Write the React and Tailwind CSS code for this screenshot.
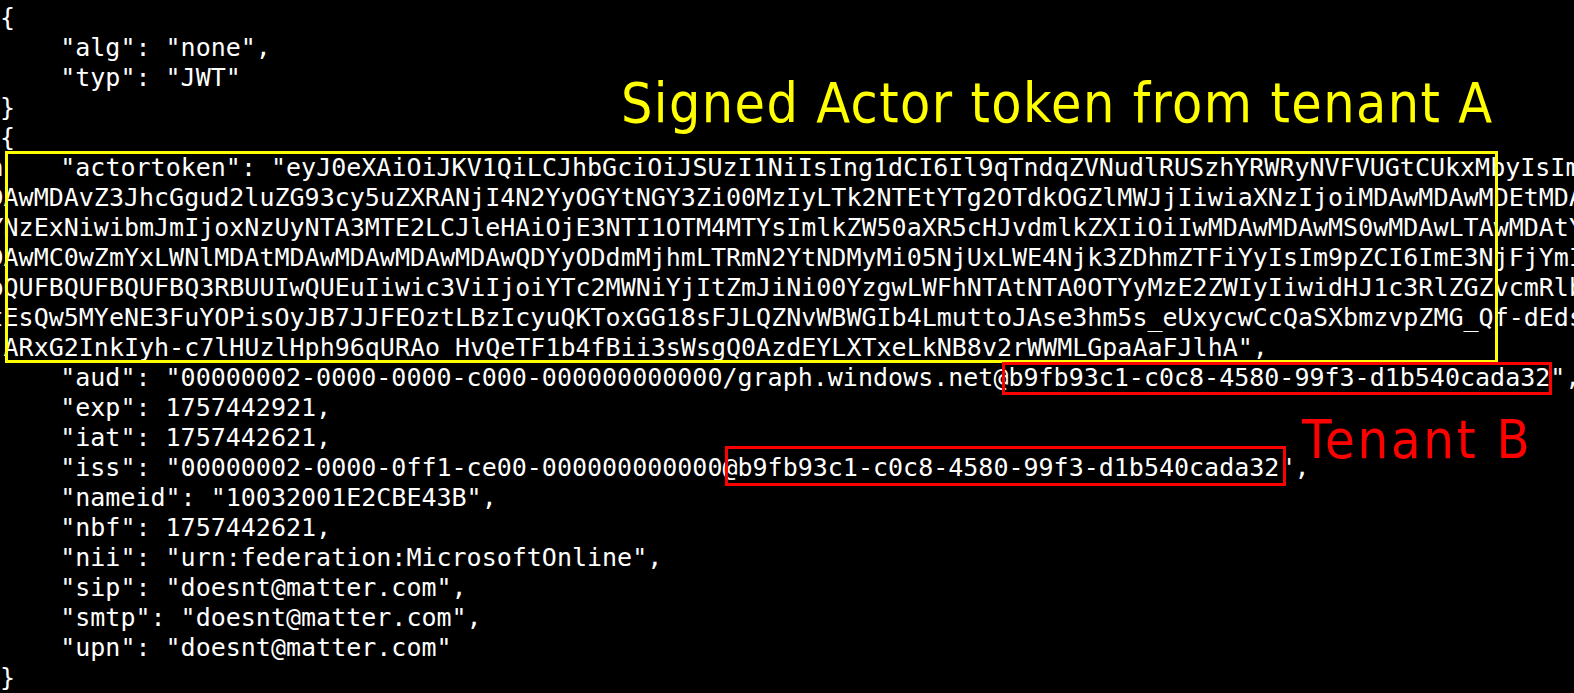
import React from "react";

const tokenLines = [
  "DAwMDAvZ3JhcGgud2luZG93cy5uZXRANjI4N2YyOGYtNGY3Zi00MzIyLTk2NTEtYTg2OTdkOGZlMWJjIiwiaXNzIjoiMDAwMDAwMDEtMDAwLTAw",
  "YNzExNiwibmJmIjoxNzUyNTA3MTE2LCJleHAiOjE3NTI1OTM4MTYsImlkZW50aXR5cHJvdmlkZXIiOiIwMDAwMDAwMS0wMDAwLTAwMDAtYzAw",
  "DAwMC0wZmYxLWNlMDAtMDAwMDAwMDAwMDAwQDYyODdmMjhmLTRmN2YtNDMyMi05NjUxLWE4Njk3ZDhmZTFiYyIsIm9pZCI6ImE3NjFjYmIiLCJ",
  "bQUFBQUFBQUFBQ3RBUUIwQUEuIiwic3ViIjoiYTc2MWNiYjItZmJiNi00YzgwLWFhNTAtNTA0OTYyMzE2ZWIyIiwidHJ1c3RlZGZvcmRlbGVn",
  "tEsQw5MYeNE3FuYOPisOyJB7JJFEOztLBzIcyuQKToxGG18sFJLQZNvWBWGIb4LmuttoJAse3hm5s_eUxycwCcQaSXbmzvpZMG_Qf-dEdsRzk",
  " ARxG2InkIyh-c7lHUzlHph96qURAo_HvQeTF1b4fBii3sWsgQ0AzdEYLXTxeLkNB8v2rWWMLGpaAaFJlhA\",",
];

const headLines = ["{", '    "alg": "none",', '    "typ": "JWT"', "}", "{"];

const tailLines = [
  '    "aud": "00000002-0000-0000-c000-000000000000/graph.windows.net@b9fb93c1-c0c8-4580-99f3-d1b540cada32",',
  '    "exp": 1757442921,',
  '    "iat": 1757442621,',
  '    "iss": "00000002-0000-0ff1-ce00-000000000000@b9fb93c1-c0c8-4580-99f3-d1b540cada32",',
  '    "nameid": "10032001E2CBE43B",',
  '    "nbf": 1757442621,',
  '    "nii": "urn:federation:MicrosoftOnline",',
  '    "sip": "doesnt@matter.com",',
  '    "smtp": "doesnt@matter.com",',
  '    "upn": "doesnt@matter.com"',
  "}",
];

export default function App() {
  return (
    <div className="relative w-[1574px] h-[693px] overflow-hidden bg-black">
      <div
        className="flex flex-col pt-[2.5px] text-[25px] leading-[30px] text-white whitespace-pre"
        style={{ fontFamily: '"DejaVu Sans Mono", "Liberation Mono", monospace' }}
      >
        {headLines.map((l, i) => (
          <div key={"h" + i} className="h-[30px]">{l}</div>
        ))}
        <div className="h-[30px]">
          <span className="ml-[-11.5px]">n</span>
          <span className="ml-[-3.5px]">
            {'    "actortoken": "eyJ0eXAiOiJKV1QiLCJhbGciOiJSUzI1NiIsIng1dCI6Il9qTndqZVNudlRUSzhYRWRyNVFVUGtCUkxMbyIsImF1ZCI6'}
          </span>
        </div>
        {tokenLines.map((l, i) => (
          <div key={"t" + i} className="h-[30px] ml-[-11.5px]">{l}</div>
        ))}
        {tailLines.map((l, i) => (
          <div key={"l" + i} className="h-[30px]">{l}</div>
        ))}
      </div>

      <div className="absolute left-[5px] top-[151px] w-[1493px] h-[212px] border-[3px] border-[#ffff00]" />
      <div className="absolute left-[1002px] top-[362px] w-[550px] h-[33px] border-[3px] border-[#ff0000]" />
      <div className="absolute left-[725px] top-[446px] w-[561px] h-[40px] border-[3px] border-[#ff0000]" />

      <div
        className="absolute left-[621px] top-[76px] text-[55px] leading-none tracking-[1.4px] text-[#ffff00] whitespace-nowrap"
        style={{ fontFamily: '"DejaVu Sans", sans-serif', fontStretch: "condensed" }}
      >
        Signed Actor token from tenant A
      </div>
      <div
        className="absolute left-[1302px] top-[413px] text-[54px] leading-none tracking-[2.6px] text-[#ff0000] whitespace-nowrap"
        style={{ fontFamily: '"DejaVu Sans", sans-serif', fontStretch: "condensed" }}
      >
        Tenant B
      </div>
    </div>
  );
}
